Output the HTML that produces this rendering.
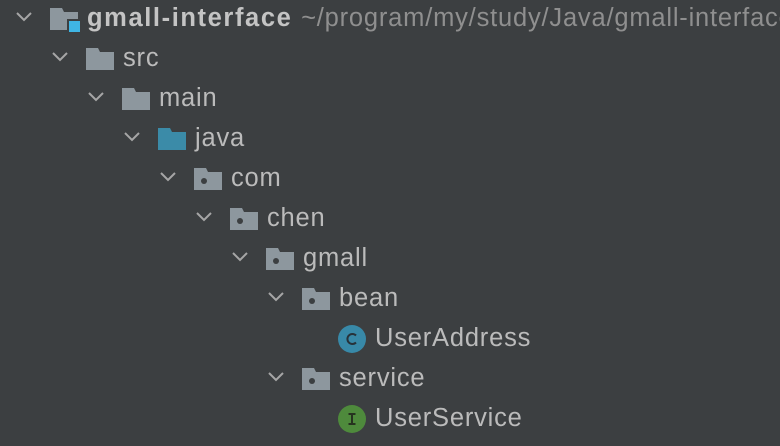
<!DOCTYPE html>
<html><head><style>
body{margin:0;width:780px;height:446px;background:#3c3f41;overflow:hidden;position:relative;font-family:"Liberation Sans",sans-serif}
.r{position:absolute;height:40px;left:0;width:780px}
.t{position:absolute;top:4px;font-size:25.5px;color:#bbbbbb;white-space:nowrap;letter-spacing:0.8px}
svg{position:absolute}
</style></head><body>
<script>
const rows=[
[0,'gmall-interface','root'],[1,'src','f'],[2,'main','f'],[3,'java','j'],[4,'com','p'],[5,'chen','p'],[6,'gmall','p'],[7,'bean','p'],[8,'UserAddress','c'],[7,'service','p'],[8,'UserService','i']];
let h='';
rows.forEach((r,k)=>{
 const [lv,name,ty]=r; const y=k*40; const ix=50+36*lv;
 h+=`<div class="r" style="top:${y}px">`;
 if(ty!=='c'&&ty!=='i'){const cx=15+36*lv;h+=`<svg style="left:${cx}px;top:10px" width="18" height="14"><path d="M2 3 L9 10 L16 3" fill="none" stroke="#a6a6a6" stroke-width="2"/></svg>`;}
 let icon='';
 const fol=(c)=>`<path d="M0 0 H12 L14 4 H28 V22 H0 Z" fill="${c}"/>`;
 if(ty==='root') icon=fol('#8d979e')+`<rect x="17" y="11" width="12" height="12" fill="#3c3f41"/><rect x="19" y="13" width="11" height="11" fill="#3fb5e4"/>`;
 else if(ty==='f') icon=fol('#8d979e');
 else if(ty==='j') icon=fol('#3b8ba8');
 else if(ty==='p') icon=fol('#8d979e')+`<circle cx="10" cy="13" r="3" fill="#3c3f41"/>`;
 else if(ty==='c') icon=`<circle cx="14" cy="14" r="14" fill="#3889a8"/><path d="M18 10.5 A5 5 0 1 0 18 17.5" fill="none" stroke="#27323a" stroke-width="2"/>`;
 else if(ty==='i') icon=`<circle cx="14" cy="14" r="14" fill="#4e8a3c"/><path d="M10.5 9 H17.5 M14 9 V19 M10.5 19 H17.5" fill="none" stroke="#26331f" stroke-width="2"/>`;
 const iy=(ty==='c'||ty==='i')?5:8;
 h+=`<svg style="left:${ix}px;top:${iy}px" width="32" height="30">${icon}</svg>`;
 const tx=ix+37;
 if(ty==='root') h+=`<div class="t" style="left:${tx}px;font-weight:bold;color:#c4c4c4;letter-spacing:1.6px">gmall-interface <span style="font-weight:normal;color:#8f8f8f;letter-spacing:0.8px">~/program/my/study/Java/gmall-interface</span></div>`;
 else h+=`<div class="t" style="left:${tx}px">${name}</div>`;
 h+='</div>';
});
document.write(h);
</script>
</body></html>
